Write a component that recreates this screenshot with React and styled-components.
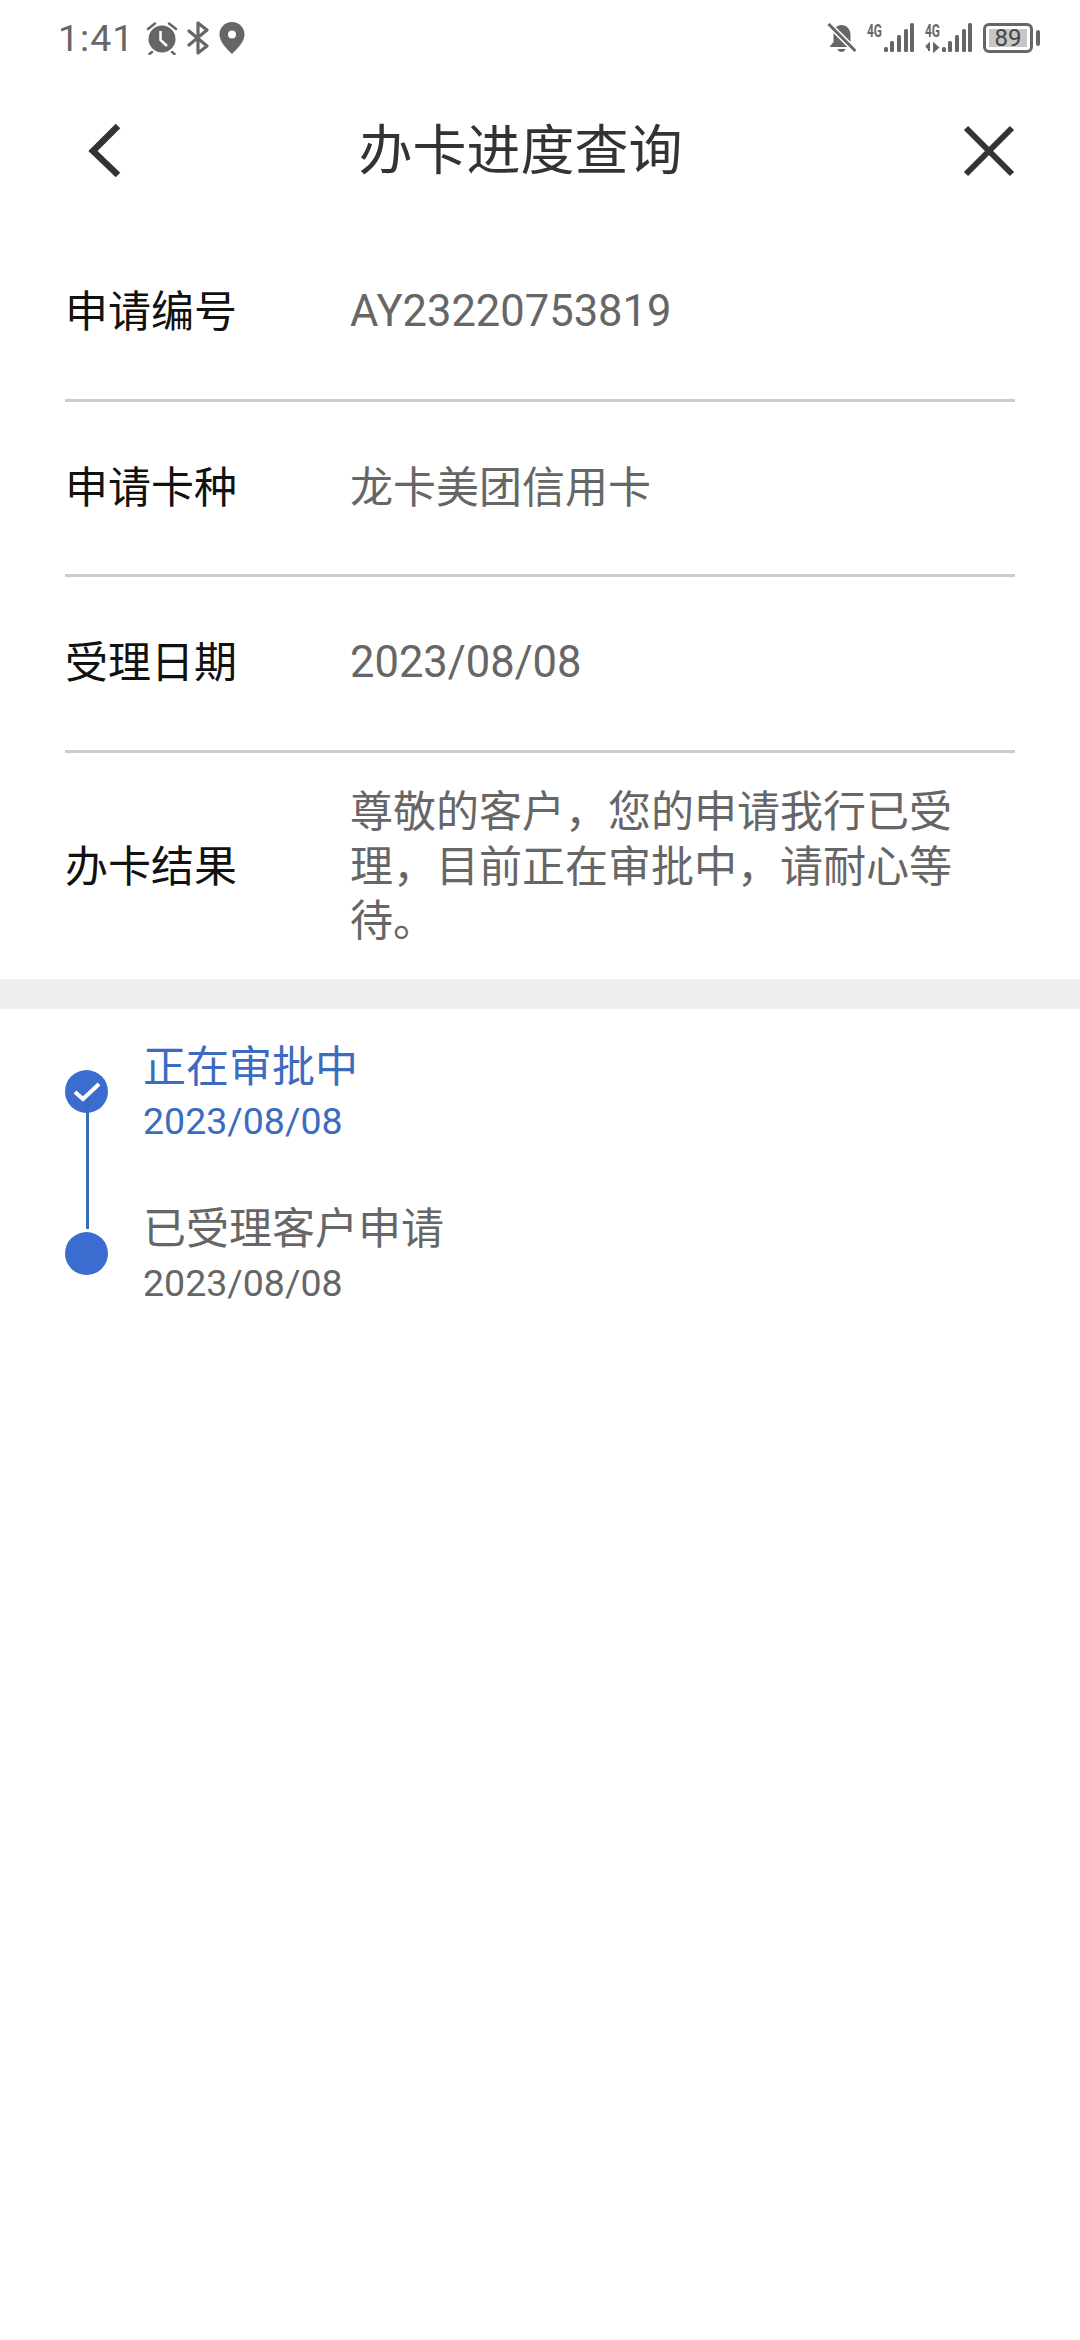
import React from 'react'
import styled, { createGlobalStyle } from 'styled-components'

const FONT = `"Roboto", "Noto Sans CJK SC", sans-serif`

const GlobalStyle = createGlobalStyle`
  html, body {
    margin: 0;
    padding: 0;
    background: #fff;
  }
  * {
    box-sizing: border-box;
  }
`

const Page = styled.div`
  width: 1080px;
  height: 2340px;
  background: #fff;
  font-family: ${ FONT };
  overflow: hidden;
`

const StatusBar = styled.div`
  display: flex;
  align-items: center;
  justify-content: space-between;
  height: 76px;
  padding: 0 40px 0 58px;
  color: #666;
`

const StatusGroup = styled.div`
  display: flex;
  align-items: center;
  gap: ${ ({ gap }) => gap }px;
`

const Clock = styled.span`
  font-size: 37.5px;
  line-height: 76px;
  letter-spacing: 1px;
  margin-right: 3px;
`

const NavBar = styled.div`
  display: flex;
  align-items: center;
  justify-content: space-between;
  height: 150px;
  padding: 0 65px 0 86px;
`

const NavTitle = styled.div`
  font-size: 54px;
  line-height: 75px;
  margin-right: 44px;
  color: #333;
`

const InfoList = styled.div`
  padding: 0 65px;
`

const InfoRow = styled.div`
  display: grid;
  grid-template-columns: 285px 1fr;
  align-items: center;
  height: ${ ({ height }) => height }px;
  padding-top: ${ ({ last }) => last ? 2 : 0 }px;
  border-bottom: ${ ({ last }) => last ? 'none' : '3px solid #ccc' };
`

const InfoLabel = styled.div`
  font-size: 43px;
  line-height: 54.5px;
  color: #111;
`

const InfoValue = styled.div`
  font-size: ${ ({ latin }) => latin ? 43.5 : 43 }px;
  line-height: 54.5px;
  color: #666;
`

const Band = styled.div`
  height: 30px;
  background: #eee;
`

const Timeline = styled.div`
  padding: 30px 0 0 65px;
`

const Step = styled.div`
  display: grid;
  grid-template-columns: 78px 1fr;
  height: 162px;
`

const Rail = styled.div`
  position: relative;
  padding-top: 31px;
`

const Line = styled.div`
  position: absolute;
  left: 21px;
  top: 60px;
  width: 3px;
  height: 130px;
  background: #3a6db8;
`

const Dot = styled.div`
  display: flex;
  align-items: center;
  justify-content: center;
  width: 43px;
  height: 43px;
  border-radius: 50%;
  background: #3b6ccf;
`

const StepTitle = styled.div`
  font-size: 43px;
  line-height: 56px;
  color: ${ ({ active }) => active ? '#3b6cc0' : '#666' };
`

const StepDate = styled.div`
  font-size: 37.5px;
  line-height: 52px;
  color: ${ ({ active }) => active ? '#3b6cc0' : '#666' };
`

const AlarmIcon = () => (
  <svg width="34" height="34" viewBox="0 0 34 34">
    <circle cx="17" cy="18" r="13.5" fill="#666" />
    <path d="M3 8 L10 2.5 M31 8 L24 2.5 M7 31 L4.5 33 M27 31 L29.5 33" stroke="#666" strokeWidth="2.5" strokeLinecap="round" />
    <path d="M15.5 10 V19 L22 25" stroke="#fff" strokeWidth="2.5" fill="none" />
  </svg>
)

const BluetoothIcon = () => (
  <svg width="24" height="34" viewBox="0 0 24 34">
    <path d="M2 24 L20 9 L11 2 V32 L20 25 L2 10" stroke="#666" strokeWidth="3.2" fill="none" strokeLinejoin="round" strokeLinecap="round" />
  </svg>
)

const PinIcon = () => (
  <svg width="26" height="32" viewBox="0 0 26 32">
    <path fillRule="evenodd" fill="#666" d="M13 0 C5.8 0 0.5 5.5 0.5 12.5 C0.5 20 8 27 13 32 C18 27 25.5 20 25.5 12.5 C25.5 5.5 20.2 0 13 0 Z M13 8.5 A4 4 0 1 1 13 16.5 A4 4 0 1 1 13 8.5 Z" />
  </svg>
)

const MutedBellIcon = () => (
  <svg width="30" height="30" viewBox="0 1 29 30">
    <path d="M3 25 H27 L24 20 V13 C24 7 20 3 15 3 C10 3 7 7 7 13 V20 Z" fill="#666" />
    <path d="M11 27 C12 31 18 31 19 27 Z" fill="#666" />
    <path d="M2 2 L29 29" stroke="#fff" strokeWidth="6" />
    <path d="M2 2 L29 29" stroke="#666" strokeWidth="3" />
  </svg>
)

const BARS = [
  { x: 17, height: 5 },
  { x: 23, height: 11 },
  { x: 30, height: 17 },
  { x: 37, height: 23 },
  { x: 43, height: 29 }
]

const SignalIcon = ({ arrows }) => (
  <svg width="47" height="40" viewBox="0 -4 47 40">
    <text x="0" y="15" fontSize="19" fontWeight="700" fill="#666" fontFamily="Roboto, sans-serif" textLength="15" lengthAdjust="spacingAndGlyphs">4G</text>
    { arrows && <path d="M4 29 V22 L1 25 M9 22 V29 L13 25.5 Z" stroke="#666" strokeWidth="2" fill="#666" /> }
    { BARS.map(({ x, height }) => (
      <rect key={ x } x={ x } y={ 30 - height } width="4" height={ height } rx="1.5" fill="#666" />
    )) }
  </svg>
)

const BatteryWrap = styled.div`
  display: flex;
  align-items: center;
  gap: 3px;
`

const Battery = styled.div`
  width: 50px;
  height: 30px;
  border: 3px solid #666;
  border-radius: 6px;
  padding: 3px;
`

const BatteryLevel = styled.div`
  height: 18px;
  background: #c6c6c6;
  font-size: 24px;
  line-height: 18px;
  text-align: center;
  color: #444;
`

const BatteryCap = styled.div`
  width: 4px;
  height: 16px;
  border-radius: 2px;
  background: #666;
`

const BackIcon = () => (
  <svg width="36" height="56" viewBox="0 0 36 56">
    <path d="M32 3 L7 28 L32 52" stroke="#333" strokeWidth="6.5" fill="none" />
  </svg>
)

const CloseIcon = () => (
  <svg width="52" height="52" viewBox="0 0 52 52">
    <path d="M3 3 L49 49 M49 3 L3 49" stroke="#333" strokeWidth="6" fill="none" />
  </svg>
)

const CheckIcon = () => (
  <svg width="30" height="24" viewBox="0 0 30 24">
    <path d="M3 12 L11 19 L27 4" stroke="#fff" strokeWidth="4" fill="none" />
  </svg>
)

const rows = [
  { label: '申请编号', value: 'AY23220753819', height: 176, latin: true },
  { label: '申请卡种', value: '龙卡美团信用卡', height: 175 },
  { label: '受理日期', value: '2023/08/08', height: 176, latin: true }
]

const App = () => (
  <Page>
    <GlobalStyle />
    <StatusBar>
      <StatusGroup gap={ 8 }>
        <Clock>1:41</Clock>
        <AlarmIcon />
        <BluetoothIcon />
        <PinIcon />
      </StatusGroup>
      <StatusGroup gap={ 11 }>
        <MutedBellIcon />
        <SignalIcon />
        <SignalIcon arrows />
        <BatteryWrap>
          <Battery><BatteryLevel>89</BatteryLevel></Battery>
          <BatteryCap />
        </BatteryWrap>
      </StatusGroup>
    </StatusBar>
    <NavBar>
      <BackIcon />
      <NavTitle>办卡进度查询</NavTitle>
      <CloseIcon />
    </NavBar>
    <InfoList>
      { rows.map(({ label, value, height, latin }) => (
        <InfoRow key={ label } height={ height }>
          <InfoLabel>{ label }</InfoLabel>
          <InfoValue latin={ latin }>{ value }</InfoValue>
        </InfoRow>
      )) }
      <InfoRow height={ 226 } last>
        <InfoLabel>办卡结果</InfoLabel>
        <InfoValue>尊敬的客户，您的申请我行已受理，目前正在审批中，请耐心等待。</InfoValue>
      </InfoRow>
    </InfoList>
    <Band />
    <Timeline>
      <Step>
        <Rail>
          <Dot><CheckIcon /></Dot>
          <Line />
        </Rail>
        <div>
          <StepTitle active>正在审批中</StepTitle>
          <StepDate active>2023/08/08</StepDate>
        </div>
      </Step>
      <Step>
        <Rail>
          <Dot />
        </Rail>
        <div>
          <StepTitle>已受理客户申请</StepTitle>
          <StepDate>2023/08/08</StepDate>
        </div>
      </Step>
    </Timeline>
  </Page>
)

export default App
